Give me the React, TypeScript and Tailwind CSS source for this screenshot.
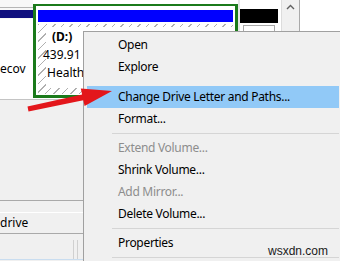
import React from "react";

const menuFont = { fontFamily: '"Noto Sans", "Open Sans", sans-serif' };

function Item({ label, disabled, active }: { label: string; disabled?: boolean; active?: boolean }) {
  if (active) {
    return (
      <div className="mx-[3px] flex h-[22px] items-center bg-[#91c9f7] pl-[31px] text-[12px] tracking-[-0.3px] text-black">
        {label}
      </div>
    );
  }
  return (
    <div
      className={
        "flex h-[22px] items-center pl-[34px] text-[12px] tracking-[-0.3px] " +
        (disabled ? "text-[#8d8d8d]" : "text-black")
      }
    >
      {label}
    </div>
  );
}

function Sep() {
  return (
    <div className="ml-[28px] mr-[3px] h-[7px] pt-[3px]">
      <div className="h-px bg-[#d5d5d5]" />
    </div>
  );
}

export default function App() {
  return (
    <div className="relative h-[261px] w-[340px] overflow-hidden bg-[#f0f0f0]" style={menuFont}>
      {/* Top disk map pane */}
      <div className="flex h-[100px] border-b border-[#c4c4c4] bg-white">
        {/* Left partition (Recovery) */}
        <div className="flex w-[33px] flex-col bg-[#f7f7f7] pt-[7px]">
          <div className="h-px bg-[#b5b5b5]" />
          <div className="mt-[2px] h-[8px] bg-[#10107e]" />
          <div className="mt-px flex-1 bg-white pt-[42px] text-[12px] leading-[16px] text-black">ecov</div>
        </div>
        {/* Selected D: partition */}
        <div className="mt-[4px] flex h-[94px] w-[205px] flex-col border-[3px] border-t-[2px] border-[#1b7a1b] bg-white px-[2px] pb-px pt-[4px]">
          <div className="h-[12px] bg-[#0000ff]" />
          <div className="mt-[2px] flex-1 bg-[repeating-linear-gradient(135deg,#b0b0b0_0px,#b0b0b0_1px,#ffffff_1px,#ffffff_6px)] pb-[6px] pl-[8px] pt-[3px]">
            <div className="h-full bg-white pt-[1px] text-[12px] leading-[18px] text-black">
              <div className="pl-[6px] font-bold">(D:)</div>
              <div className="ml-[-3px]">439.91</div>
              <div className="pl-[1px]">Healthy</div>
            </div>
          </div>
        </div>
        <div className="w-[2px] bg-[#e6e6e6]" />
        {/* Black unallocated partition */}
        <div className="flex w-[38px] flex-col pt-[9px]">
          <div className="h-[14px] bg-black" />
          <div className="mx-[3px] mt-[2px] flex-1 border border-[#a8a8a8] bg-white" />
        </div>
        <div className="w-[3px] bg-white" />
        {/* Scrollbar */}
        <div className="flex w-[19px] flex-col items-center border-l border-r border-[#dcdcdc] border-r-[#a9a9a9] bg-[#f0f0f0] pt-[4px]">
          <svg width="9" height="6" viewBox="0 0 9 6">
            <path d="M1 5 L4.5 1.5 L8 5" fill="none" stroke="#606060" strokeWidth="1.4" />
          </svg>
        </div>
        <div className="flex-1 bg-white" />
      </div>

      {/* Lower left pane */}
      <div className="flex w-[84px] flex-col">
        <div className="h-[100px]" />
        <div className="h-[12px] border-t border-[#a9a9a9]" />
        <div className="flex h-[21px] items-center border-t border-white text-[12px] text-black">drive</div>
        <div className="flex h-[26px] border-t border-[#a9a9a9]">
          <div className="w-[73px]" />
          <div className="mt-[6px] w-[5px] border-l border-r border-[#d0d0d0]" />
        </div>
        <div className="h-px bg-[#c9ddf0]" />
      </div>

      {/* Context menu */}
      <div className="absolute left-[83px] top-[31px] h-[240px] w-[260px] border border-[#a0a0a0] bg-[#f0f0f0] pt-[2px]">
        <Item label="Open" />
        <Item label="Explore" />
        <div className="h-[8px]" />
        <Item label="Change Drive Letter and Paths..." active />
        <Item label="Format..." />
        <Sep />
        <Item label="Extend Volume..." disabled />
        <Item label="Shrink Volume..." />
        <Item label="Add Mirror..." disabled />
        <Item label="Delete Volume..." />
        <Sep />
        <Item label="Properties" />
        <Sep />
      </div>

      {/* Red arrow */}
      <svg className="pointer-events-none absolute left-0 top-0" width="340" height="261" viewBox="0 0 340 261">
        <polygon
          points="27.5,106.6 82.1,94.4 80.8,88.5 112,91 84.6,106.1 83.3,100.2 28.5,111.4"
          fill="#e3161b"
        />
      </svg>

      {/* Watermark */}
      <div
        className="absolute right-[12px] top-[243px] text-[12px] leading-[16px] text-[#1a1a1a]"
        style={{ fontFamily: '"Liberation Sans", Arial, sans-serif' }}
      >
        wsxdn.com
      </div>
    </div>
  );
}
